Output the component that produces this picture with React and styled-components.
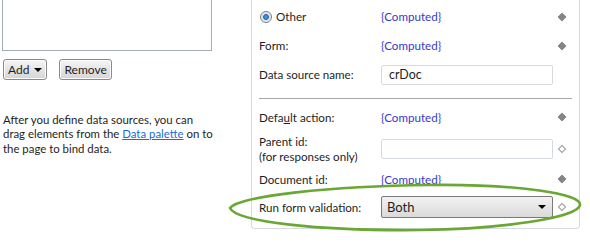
import React from "react";
import styled, { createGlobalStyle } from "styled-components";

const GlobalStyle = createGlobalStyle`
  html, body {
    margin: 0;
    padding: 0;
    background: #ffffff;
    overflow: hidden;
  }
  body {
    font-family: "Segoe UI", Lato, "Liberation Sans", sans-serif;
    font-size: 11.6px;
    color: #1e1e1e;
  }
`;

const App = () => {
  return (
    <>
      <GlobalStyle />
      <Page>
        <LeftColumn>
          <ListBox />
          <ButtonRow>
            <Button>
              Add <Caret />
            </Button>
            <Button>Remove</Button>
          </ButtonRow>
          <Help>
            After you define data sources, you can
            <br />
            drag elements from the <HelpLink href="#">Data palette</HelpLink> on to
            <br />
            the page to bind data.
          </Help>
        </LeftColumn>

        <Panel>
          <Row h={29}>
            <Label>
              <Radio />
              Other
            </Label>
            <Computed>{"{Computed}"}</Computed>
            <Diamond />
          </Row>
          <Row h={29}>
            <Label>Form:</Label>
            <Computed>{"{Computed}"}</Computed>
            <Diamond />
          </Row>
          <Row h={29}>
            <Label>Data source name:</Label>
            <TextBox>crDoc</TextBox>
            <span />
          </Row>
          <Separator />
          <Row h={28}>
            <Label>
              Defa<u>u</u>lt action:
            </Label>
            <Computed>{"{Computed}"}</Computed>
            <Diamond />
          </Row>
          <Row h={35}>
            <Label>
              Parent id:
              <br />
              (for responses only)
            </Label>
            <TextBox />
            <Diamond hollow />
          </Row>
          <Row h={26}>
            <Label>Document id:</Label>
            <Computed>{"{Computed}"}</Computed>
            <Diamond />
          </Row>
          <Row h={30}>
            <Label>Run form validation:</Label>
            <Select>
              Both
              <Caret />
            </Select>
            <Diamond hollow />
          </Row>
        </Panel>

        <Annotation width="590" height="246" viewBox="0 0 590 246">
          <path
            d="M230 208 C 240 196, 330 186, 430 185 C 520 184, 582 194, 580 205 C 578 218, 500 229, 420 230 C 320 231, 236 222, 230 208 Z"
            fill="none"
            stroke="#6aa733"
            strokeWidth="2.6"
          />
        </Annotation>
      </Page>
    </>
  );
};

const Page = styled.div`
  position: relative;
  width: 590px;
  height: 246px;
  display: flex;
  align-items: flex-start;
`;

const LeftColumn = styled.div`
  width: 251px;
  display: flex;
  flex-direction: column;
`;

const ListBox = styled.div`
  margin-left: 2px;
  width: 208px;
  height: 50px;
  border: 1px solid #a5acb5;
  border-top: none;
  background: #fff;
`;

const ButtonRow = styled.div`
  display: flex;
  gap: 12px;
  margin: 8px 0 0 3px;
`;

const Button = styled.div`
  display: flex;
  align-items: center;
  gap: 5px;
  height: 19px;
  padding: 0 4px;
  border: 1px solid #8a8a8a;
  border-radius: 3px;
  background: linear-gradient(#f6f6f6, #e4e4e4 50%, #d6d6d6);
  box-shadow: inset 0 0 0 1px #fcfcfc;
  color: #1e1e1e;
  font-size: 12px;
`;

const Caret = styled.span`
  width: 0;
  height: 0;
  border-left: 4px solid transparent;
  border-right: 4px solid transparent;
  border-top: 4px solid #000;
  margin-left: auto;
`;

const Help = styled.p`
  margin: 33px 0 0 3px;
  line-height: 14.3px;
  font-size: 11.4px;
  color: #1e1e1e;
`;

const HelpLink = styled.a`
  color: #1a6ad8;
  text-decoration: underline;
`;

const Panel = styled.div`
  width: 313px;
  padding: 2px 7px 6px;
  border: 1px solid #d6dbe0;
  border-top: none;
  border-radius: 0 0 4px 4px;
`;

const Row = styled.div`
  display: grid;
  grid-template-columns: 122px 172px 18px;
  align-items: center;
  height: ${(props) => props.h}px;
`;

const Label = styled.div`
  display: flex;
  align-items: center;
  flex-wrap: wrap;
  line-height: 15px;
  color: #1e1e1e;
`;

const Radio = styled.span`
  box-sizing: border-box;
  width: 12px;
  height: 12px;
  margin: 0 4px 0 1px;
  border-radius: 50%;
  border: 1px solid #7b7b7b;
  background: radial-gradient(circle, #4aa6e8 0, #1f6fc0 2.5px, #d8d8d8 3.2px, #f4f4f4 5px);
`;

const Computed = styled.span`
  color: #3838cc;
`;

const TextBox = styled.div`
  box-sizing: border-box;
  height: 20px;
  padding: 0 7px;
  display: flex;
  align-items: center;
  border: 1px solid #d5dae0;
  border-radius: 2px;
  background: #fff;
  font-size: 12.4px;
`;

const Select = styled.div`
  box-sizing: border-box;
  height: 22px;
  padding: 0 6px 0 5px;
  display: flex;
  align-items: center;
  border: 1px solid #7a7a7a;
  border-radius: 2px;
  background: linear-gradient(#f2f2f2, #e6e6e6 50%, #dadada);
  font-size: 13px;
`;

const Diamond = styled.span`
  justify-self: center;
  box-sizing: border-box;
  width: 6px;
  height: 6px;
  transform: rotate(45deg);
  background: ${(props) => (props.hollow ? "#fff" : "#858585")};
  border: 1px solid ${(props) => (props.hollow ? "#9a9a9a" : "#858585")};
`;

const Separator = styled.div`
  height: 1px;
  margin: 9px 0 4px;
  background: #a8a8a8;
`;

const Annotation = styled.svg`
  position: absolute;
  left: 0;
  top: 0;
  pointer-events: none;
`;

export default App;
